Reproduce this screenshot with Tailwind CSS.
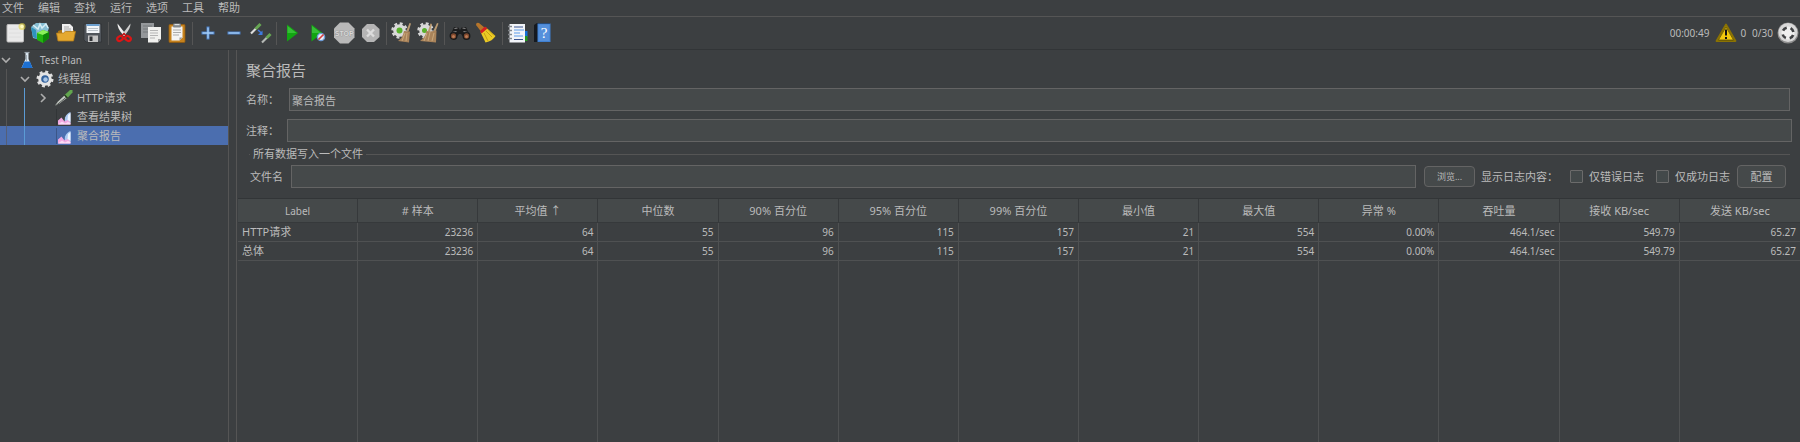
<!DOCTYPE html>
<html lang="zh-CN">
<head>
    <meta charset="UTF-8">
    <meta name="viewport" content="width=device-width, initial-scale=1.0">
    <title>聚合报告</title>
    <script src="https://cdn.jsdelivr.net/npm/@tailwindcss/browser@4"></script>
</head>
<body class="flex flex-col h-screen overflow-hidden bg-[#3c3f41] text-[#bbbbbb] text-[11px] leading-4 font-['Noto_Sans','Noto_Sans_CJK_SC',sans-serif]">
    <!-- Menu bar -->
    <nav class="flex shrink-0 gap-[14px] px-[2px] h-[17px] leading-[14px] border-b border-[#555555]">
        <button>文件</button>
        <button>编辑</button>
        <button>查找</button>
        <button>运行</button>
        <button>选项</button>
        <button>工具</button>
        <button>帮助</button>
    </nav>

    <!-- Toolbar -->
    <header class="flex shrink-0 items-center gap-[2px] h-[33px] pl-[2px] border-b border-[#323537]">
        <button aria-label="新建" class="size-6"><svg class="size-6" viewBox="0 0 24 24">
            <rect x="5" y="3.500" width="16.500" height="17.500" rx="1" fill="#e9e9e9" stroke="#bdbdbd"/>
            <path d="M7 8h9M7 12h12M7 16h12" stroke="#dedede"/>
            <circle cx="20" cy="5.500" r="3.500" fill="#e8d84a" opacity=".6"/><circle cx="20" cy="5.500" r="1.700" fill="#fffbc0"/>
        </svg></button>
        <button aria-label="模板" class="size-6"><svg class="size-6" viewBox="0 0 24 24">
            <path d="M3 6l5-4h10l3 5-5 13-11-3z" fill="#86bdd2"/>
            <path d="M3 6l5 3 1 9-4-2z" fill="#2f93bd"/><path d="M5 4l5 4 2-5 2 4 4-4 2 4" stroke="#d6eef6" stroke-width="1.500" fill="none"/>
            <path d="M9 12l6-3 6 2v6l-6 5-6-3z" fill="#22b310"/><path d="M9 12l6-3 6 2-6 3z" fill="#8df05c"/><path d="M15 14l6-3v6l-6 5z" fill="#0e8608"/>
        </svg></button>
        <button aria-label="打开" class="size-6"><svg class="size-6" viewBox="0 0 24 24">
            <path d="M4 10l3-1h13v10H5z" fill="#a97315"/>
            <path d="M8 3h8l3 3v8H8z" fill="#f0f0f0"/><path d="M10 6h5M10 8h7M10 10h7" stroke="#a9a9a9"/>
            <path d="M2.500 12h7l2-1.500h10L19.500 20H4z" fill="#e5a930" stroke="#b57c17" stroke-width=".8"/>
        </svg></button>
        <button aria-label="保存" class="size-6"><svg class="size-6" viewBox="0 0 24 24">
            <path d="M4 3h17.500v18H6l-2-2z" fill="#50555b" stroke="#2e3134" stroke-width=".7"/>
            <rect x="6.500" y="3" width="13" height="9" fill="#f2f5f8"/><rect x="6.500" y="3" width="13" height="2" fill="#6da0cf"/><path d="M8 7.500h10M8 9.500h10" stroke="#b9c1c8"/>
            <rect x="8" y="14.500" width="10" height="6.500" fill="#c4c4c4"/><rect x="9.500" y="15.500" width="3" height="4.500" fill="#303336"/>
        </svg></button>
        <span class="h-[23px] w-[2px] mx-px border-r border-[#555555]"></span>
        <button aria-label="剪切" class="size-6"><svg class="size-6" viewBox="0 0 24 24">
            <path d="M5.500 2.500l8.500 11-2 1.500C8.500 11 5.500 7 5.500 2.500z" fill="#f0f0f0"/><path d="M18.500 2.500L10 13.500l2 1.500C15.500 11 18.500 7 18.500 2.500z" fill="#cfcfcf"/>
            <ellipse cx="8" cy="17.500" rx="3" ry="2.200" transform="rotate(-30 8 17.500)" fill="none" stroke="#dd1515" stroke-width="2.200"/>
            <ellipse cx="16" cy="17.500" rx="3" ry="2.200" transform="rotate(30 16 17.500)" fill="none" stroke="#dd1515" stroke-width="2.200"/>
            <path d="M9.500 15l2.500-2.500 2.500 2.500" stroke="#c01010" stroke-width="1.500" fill="none"/>
        </svg></button>
        <button aria-label="复制" class="size-6"><svg class="size-6" viewBox="0 0 24 24">
            <rect x="3" y="2" width="13" height="15" fill="#94979a"/><path d="M5 5h9M5 8h9M5 11h6" stroke="#75797b"/>
            <path d="M10 6h13v12l-3 3.500H10z" fill="#f0f0ee"/><path d="M20 21.500v-3.500h3z" fill="#a4a4a4"/>
            <path d="M12 9.500h8M12 12h8M12 14.500h8M12 17h5" stroke="#b4b4b4"/>
        </svg></button>
        <button aria-label="粘贴" class="size-6"><svg class="size-6" viewBox="0 0 24 24">
            <rect x="5" y="3.500" width="16" height="18" rx="1" fill="#c6821d" stroke="#915a10" stroke-width=".8"/>
            <path d="M7.500 5.500h11v11l-3 3h-8z" fill="#f4f4f4"/><path d="M15.500 19.500v-3h3z" fill="#9b9b9b"/>
            <path d="M9 9h8M9 11.500h8M9 14h6" stroke="#aaaaaa"/>
            <rect x="9" y="2.500" width="8" height="4" rx="1" fill="#83888b"/><rect x="10.500" y="3" width="5" height="1.200" fill="#dce0e2"/>
        </svg></button>
        <span class="h-[23px] w-[2px] mx-px border-r border-[#555555]"></span>
        <button aria-label="展开" class="size-6"><svg class="size-6" viewBox="0 0 24 24">
            <path d="M12 5.500v13M5.500 12h13" stroke="#4a7fc6" stroke-width="3"/><path d="M12 6.500v11M6.500 12h11" stroke="#a4cdf6" stroke-width="1.400"/>
        </svg></button>
        <button aria-label="收起" class="size-6"><svg class="size-6" viewBox="0 0 24 24">
            <path d="M5.500 12h13" stroke="#4a7fc6" stroke-width="3"/><path d="M6.500 12h11" stroke="#a4cdf6" stroke-width="1.400"/>
        </svg></button>
        <button aria-label="切换" class="size-6"><svg class="size-6" viewBox="0 0 24 24">
            <path d="M3 12.500l5-5" stroke="#dddddd" stroke-width="2.200"/><path d="M7.500 8l5-5" stroke="#67a653" stroke-width="3"/>
            <path d="M14 21.500l5-5" stroke="#b5b9b5" stroke-width="2.200"/><path d="M18.500 17l4-4" stroke="#67a653" stroke-width="3"/>
            <path d="M10 9l4 3.500" stroke="#3e7ae0" stroke-width="1.500"/><path d="M14.500 9.500v4.500H10z" fill="#3e7ae0"/>
        </svg></button>
        <span class="h-[23px] w-[2px] mx-px border-r border-[#555555]"></span>
        <button aria-label="启动" class="size-6"><svg class="size-6" viewBox="0 0 24 24">
            <path d="M7 3.500l11 8.500-11 8.500z" fill="#12a512"/><path d="M7.500 5l9 7h-9z" fill="#4fd04f" opacity=".6"/>
        </svg></button>
        <button aria-label="不停顿开始" class="size-6"><svg class="size-6" viewBox="0 0 24 24">
            <path d="M5.500 3.500l11 8.500-11 8.500z" fill="#12a512"/><path d="M6 5l9 7H6z" fill="#4fd04f" opacity=".6"/>
            <circle cx="15" cy="16" r="3.600" fill="#e8eef6" stroke="#6d9bd6" stroke-width="1.400"/><path d="M12.500 18.500l5-5" stroke="#d83a3a" stroke-width="1.600"/>
        </svg></button>
        <button aria-label="停止" class="size-6"><svg class="size-6" viewBox="0 0 24 24">
            <path d="M8 1.500h8.500l6 6v9l-6 6H8l-6-6v-9z" fill="#b9b9b9"/>
            <text x="12.200" y="15" text-anchor="middle" font-family="Liberation Sans" font-weight="bold" font-size="7" fill="#d9d9d9" stroke="#8f8f8f" stroke-width=".7" paint-order="stroke">STOP</text>
        </svg></button>
        <button aria-label="关闭" class="size-6"><svg class="size-6" viewBox="0 0 24 24">
            <path d="M9 3h7l5.500 5v8L16 21H9l-5-5V8z" fill="#b5b5b5"/><path d="M9 8.500l7 7M16 8.500l-7 7" stroke="#dcdcdc" stroke-width="2.400"/>
        </svg></button>
        <span class="h-[23px] w-[2px] mx-px border-r border-[#555555]"></span>
        <button aria-label="清除" class="size-6"><svg class="size-6" viewBox="0 0 24 24">
            <circle cx="9.500" cy="9.500" r="7" fill="none" stroke="#d5d5d5" stroke-width="2.400" stroke-dasharray="2.900 2.600"/><circle cx="9.500" cy="9.500" r="6.300" fill="#d9d9d9"/><circle cx="9.500" cy="9.500" r="3" fill="#58b02c"/>
            <path d="M19.500 2l1.500.5-2.500 8-2-1z" fill="#b99a71"/><path d="M14 10l6 .5-1 11-11-1.500c3-2 5-5 6-10z" fill="#a9835a"/><path d="M15 12l-3 8M17 12l-1 8" stroke="#d0b184" stroke-width=".8"/>
        </svg></button>
        <button aria-label="清除全部" class="size-6"><svg class="size-6" viewBox="0 0 24 24">
            <circle cx="9.500" cy="9.500" r="7" fill="none" stroke="#d5d5d5" stroke-width="2.400" stroke-dasharray="2.900 2.600"/><circle cx="9.500" cy="9.500" r="6.300" fill="#d9d9d9"/><circle cx="8.500" cy="9.500" r="2.500" fill="#58b02c"/>
            <path d="M14.500 2.500l1.500.5-2 8-2-1zM21 2l1.500.5-3 8-2-1z" fill="#b99a71"/><path d="M10.500 10l4 .5 6-1-.5 12L4 20c3-2 5.500-5 6.500-10z" fill="#a9835a"/><path d="M11 12l-3 8M14 11l-2 9M18 12l-2 8" stroke="#d0b184" stroke-width=".8"/>
        </svg></button>
        <span class="h-[23px] w-[2px] mx-px border-r border-[#555555]"></span>
        <button aria-label="查找" class="size-6"><svg class="size-6" viewBox="0 0 24 24">
            <path d="M6 6h4l2 3 2-3h4l4 9-5 3-4-5h-2l-4 5-5-3z" fill="#1c1d1e"/><path d="M6.500 7.500l3-.500M14.500 7l3 .500M4.500 11.500l4-1M15.500 10.500l4 1" stroke="#8c8c8c" stroke-width="1.200"/>
            <circle cx="5.500" cy="15" r="3.300" fill="#80492e" stroke="#17191a" stroke-width="1.300"/><circle cx="18.500" cy="15" r="3.300" fill="#80492e" stroke="#17191a" stroke-width="1.300"/>
            <circle cx="5.500" cy="15.500" r="1.500" fill="#bb7d58"/><circle cx="18.500" cy="15.500" r="1.500" fill="#bb7d58"/>
        </svg></button>
        <button aria-label="重置查找" class="size-6"><svg class="size-6" viewBox="0 0 24 24">
            <path d="M2 4q0-3 3-2l6 5-4 3.500z" fill="#b5752b"/>
            <path d="M12 6.500L21.500 15q-3 5-10 6.500L6.500 11z" fill="#eccb25"/><path d="M12 10l6 6M10 12l4 8M14 8.500l6 6" stroke="#b8920f" stroke-width=".8"/>
            <path d="M11 5.500l2.500 2-6 5-1.500-2.500z" fill="#d32020"/>
        </svg></button>
        <span class="h-[23px] w-[2px] mx-px border-r border-[#555555]"></span>
        <button aria-label="函数助手" class="size-6"><svg class="size-6" viewBox="0 0 24 24">
            <rect x="18" y="10" width="3.500" height="6" fill="#1570d8"/><rect x="18" y="15" width="3.500" height="5" fill="#22961f"/>
            <rect x="3.500" y="3" width="15.500" height="18.500" fill="#f2f4f8"/>
            <path d="M8 6h9M8 18.500h9" stroke="#3a5490" stroke-width="1.200"/><path d="M8 9h10M8 12h6M8 15h9" stroke="#5c9bea" stroke-width="1.200"/>
            <path d="M2 5.500h4M2 9.500h4M2 13.500h4M2 17.500h4" stroke="#83878c" stroke-width="1.400"/>
        </svg></button>
        <button aria-label="帮助" class="size-6"><svg class="size-6" viewBox="0 0 24 24">
            <path d="M2 4l3-2h13v19H2z" fill="#15191f"/><rect x="5.500" y="2.500" width="13" height="18.500" fill="#3f80d2"/><rect x="6.500" y="3.500" width="11" height="16.500" fill="#6ba0e4" opacity=".5"/>
            <text x="12" y="17" text-anchor="middle" font-family="Liberation Serif" font-size="15" fill="#ffffff">?</text>
        </svg></button>

        <div class="ml-auto flex items-center text-[10px] pr-px">
            <span>00:00:49</span>
            <button aria-label="警告" class="ml-[5px] size-6"><svg class="size-6" viewBox="0 0 24 24">
                <path d="M12 3.500L21.500 20h-19z" fill="#f2c90c" stroke="#8a7203" stroke-width="1.800" stroke-linejoin="round"/><path d="M12 6L19.500 19h-15z" fill="none" stroke="#2f2b08" stroke-width=".6"/>
                <path d="M12 8.500v6M12 16v2" stroke="#121212" stroke-width="2"/>
            </svg></button>
            <span class="ml-[2px]">0</span>
            <span class="ml-[6px]">0/30</span>
            <svg class="ml-1 size-[22px]" viewBox="0 0 22 22">
                <circle cx="11" cy="11" r="10.500" fill="#8d8d8d"/><circle cx="11" cy="10.500" r="9.500" fill="#d8d8d8"/><circle cx="11" cy="11" r="6.500" fill="#f0f0f0"/>
                <circle cx="11" cy="11" r="5.500" fill="none" stroke="#3f4143" stroke-width="2.600" stroke-dasharray="4.640 4" stroke-dashoffset="-2"/>
            </svg>
        </div>
    </header>

    <div class="flex flex-1 min-h-0">
        <!-- Test plan tree -->
        <aside class="w-[229px] shrink-0 border-r border-[#555555]">
            <ul>
                <li class="flex items-center h-[19px] pl-px">
                    <svg class="size-[10px]" viewBox="0 0 10 10"><path d="M1 3l4 4 4-4" fill="none" stroke="#adadad" stroke-width="1.600"/></svg>
                    <svg class="ml-[7px] w-[18px] h-[18px]" viewBox="0 0 18 18">
                        <path d="M7.500 2h3v6l4 9h-11l4-9z" fill="#dce8f2"/><path d="M6.500 10.500h5.500l2.500 6.500h-11z" fill="#1c70d2"/><path d="M6.500 1.500h5" stroke="#9ca6ae" stroke-width="1.200"/><path d="M8.500 4v6" stroke="#a3afb8"/>
                    </svg>
                    <span class="ml-1 text-[10px]">Test Plan</span>
                </li>
                <li class="flex items-center h-[19px]">
                    <span class="ml-[6px] h-full w-[14px] border-l border-[#555555]"></span>
                    <svg class="size-[10px]" viewBox="0 0 10 10"><path d="M1 3l4 4 4-4" fill="none" stroke="#adadad" stroke-width="1.600"/></svg>
                    <svg class="ml-[6px] w-[18px] h-[18px]" viewBox="0 0 18 18">
                        <circle cx="9" cy="9" r="7.200" fill="none" stroke="#dedede" stroke-width="2.600" stroke-dasharray="2.900 2.755"/><circle cx="9" cy="9" r="6.800" fill="#e4e4e4"/><circle cx="9" cy="9" r="3.800" fill="#34629c"/><circle cx="9.500" cy="9.500" r="2.200" fill="#a8c6e8"/>
                    </svg>
                    <span class="ml-1">线程组</span>
                </li>
                <li class="flex items-center h-[19px]">
                    <span class="ml-[6px] h-full w-[18px] border-l border-[#555555]"></span>
                    <span class="h-full w-[14px] border-l border-[#5b9bd5]"></span>
                    <svg class="size-[10px]" viewBox="0 0 10 10"><path d="M3 1l4 4-4 4" fill="none" stroke="#adadad" stroke-width="1.600"/></svg>
                    <svg class="ml-[7px] w-[18px] h-[18px]" viewBox="0 0 18 18">
                        <path d="M0 16.500l3-4L10 6l2.500 2.500-8 6z" fill="#c4c9c4"/><path d="M1 16.500L11.500 8" stroke="#555a56"/><path d="M9 6.500L15 1h2.500v2.500L12 9.500z" fill="#62a64e"/><path d="M9.500 6l3 3" stroke="#25351f" stroke-width="1.300"/>
                    </svg>
                    <span class="ml-1">HTTP请求</span>
                </li>
                <li class="flex items-center h-[19px]">
                    <span class="ml-[6px] h-full w-[18px] border-l border-[#555555]"></span>
                    <span class="h-full w-[31px] border-l border-[#5b9bd5]"></span>
                    <svg class="w-[18px] h-[18px]" viewBox="0 0 18 18">
                        <path d="M1.500 1v16" stroke="#323537"/>
                        <path d="M9.500 15L10 9.500q2-4.500 5.500-5.500v11z" fill="#a9c8f2"/><path d="M12.500 12l.5-5 2.500-2v9z" fill="#edf4ff"/>
                        <path d="M3 16.500v-4l3.500-3 3 4 3-1.500 3 2.500v2z" fill="#f3a9e2"/><path d="M3 16.500l4-3 3 2 3-1.500 2.500 1v1.500z" fill="#fbdcf5"/>
                    </svg>
                    <span class="ml-1">查看结果树</span>
                </li>
                <li class="flex items-center h-[19px] bg-[#4b6eaf]">
                    <span class="ml-[6px] h-full w-[18px] border-l border-[#555f78]"></span>
                    <span class="h-full w-[31px] border-l border-[#5b9bd5]"></span>
                    <svg class="w-[18px] h-[18px]" viewBox="0 0 18 18">
                        <path d="M1.500 1v16" stroke="#3c5688"/>
                        <path d="M9.500 15L10 9.500q2-4.500 5.500-5.500v11z" fill="#a9c8f2"/><path d="M12.500 12l.5-5 2.500-2v9z" fill="#edf4ff"/>
                        <path d="M3 16.500v-4l3.500-3 3 4 3-1.500 3 2.500v2z" fill="#f3a9e2"/><path d="M3 16.500l4-3 3 2 3-1.500 2.500 1v1.500z" fill="#fbdcf5"/>
                    </svg>
                    <span class="ml-1">聚合报告</span>
                </li>
            </ul>
        </aside>

        <!-- Aggregate report -->
        <main class="flex flex-col flex-1 min-w-0 ml-[7px] border-l border-[#555555]">
            <div class="pl-[9px] pr-2">
                <h1 class="text-[15px] leading-5 pt-[10px]">聚合报告</h1>
                <div class="flex items-center mt-2 pr-[2px]">
                    <label for="name" class="w-[43px]">名称：</label>
                    <input id="name" type="text" value="聚合报告" class="flex-1 h-[23px] px-[2px] bg-[#45494a] border border-[#646464]">
                </div>
                <div class="flex items-center mt-2">
                    <label for="comment" class="w-[41px]">注释：</label>
                    <input id="comment" type="text" class="flex-1 h-[23px] px-[2px] bg-[#45494a] border border-[#646464]">
                </div>
                <fieldset class="mt-1 ml-px mr-[2px]">
                    <legend class="flex items-center w-full gap-[3px]">
                        <span class="ml-[2px] w-px border-t border-[#555555]"></span>
                        <span>所有数据写入一个文件</span>
                        <span class="flex-1 border-t border-[#555555]"></span>
                    </legend>
                    <div class="flex items-center mt-[3px] pl-[3px] pr-1">
                        <label for="file" class="w-[41px]">文件名</label>
                        <input id="file" type="text" class="flex-1 h-[23px] px-[2px] bg-[#45494a] border border-[#646464]">
                        <button class="ml-2 w-[51px] h-[21px] text-[9px] bg-[#45494a] border border-[#646464] rounded-sm">浏览...</button>
                        <span class="ml-[6px]">显示日志内容：</span>
                        <input id="errors" type="checkbox" class="ml-3 appearance-none size-[13px] bg-[#43494a] border border-[#6b6b6b] rounded-[1px]">
                        <label for="errors" class="ml-[6px]">仅错误日志</label>
                        <input id="success" type="checkbox" class="ml-3 appearance-none size-[13px] bg-[#43494a] border border-[#6b6b6b] rounded-[1px]">
                        <label for="success" class="ml-[6px]">仅成功日志</label>
                        <button class="ml-[7px] w-[49px] h-[23px] bg-[#45494a] border border-[#646464] rounded-sm">配置</button>
                    </div>
                </fieldset>
            </div>

            <div class="flex-1 mt-[10px] ml-px border-t border-[#323537]">
                <table class="w-full h-full table-fixed border-separate border-spacing-0">
                    <thead>
                        <tr class="h-6 bg-[#45494a] *:p-0 *:font-normal *:border-r *:last:border-r-0 *:border-b *:border-[#36393b]">
                            <th class="text-[10px]">Label</th>
                            <th># 样本</th>
                            <th>平均值 ↑</th>
                            <th>中位数</th>
                            <th>90% 百分位</th>
                            <th>95% 百分位</th>
                            <th>99% 百分位</th>
                            <th>最小值</th>
                            <th>最大值</th>
                            <th>异常 %</th>
                            <th>吞吐量</th>
                            <th>接收 KB/sec</th>
                            <th>发送 KB/sec</th>
                        </tr>
                    </thead>
                    <tbody>
                        <tr class="h-[19px] text-right text-[10px] *:py-0 *:px-1 *:border-r *:last:border-r-0 *:border-b *:border-[#4f5152]">
                            <td class="text-left text-[11px]">HTTP请求</td>
                            <td>23236</td>
                            <td>64</td>
                            <td>55</td>
                            <td>96</td>
                            <td>115</td>
                            <td>157</td>
                            <td>21</td>
                            <td>554</td>
                            <td>0.00%</td>
                            <td>464.1/sec</td>
                            <td>549.79</td>
                            <td>65.27</td>
                        </tr>
                        <tr class="h-[19px] text-right text-[10px] *:py-0 *:px-1 *:border-r *:last:border-r-0 *:border-b *:border-[#4f5152]">
                            <td class="text-left text-[11px]">总体</td>
                            <td>23236</td>
                            <td>64</td>
                            <td>55</td>
                            <td>96</td>
                            <td>115</td>
                            <td>157</td>
                            <td>21</td>
                            <td>554</td>
                            <td>0.00%</td>
                            <td>464.1/sec</td>
                            <td>549.79</td>
                            <td>65.27</td>
                        </tr>
                        <tr class="*:p-0 *:border-r *:last:border-r-0 *:border-[#4f5152]">
                            <td></td><td></td><td></td><td></td><td></td><td></td><td></td><td></td><td></td><td></td><td></td><td></td><td></td>
                        </tr>
                    </tbody>
                </table>
            </div>
        </main>
    </div>
</body>
</html>
